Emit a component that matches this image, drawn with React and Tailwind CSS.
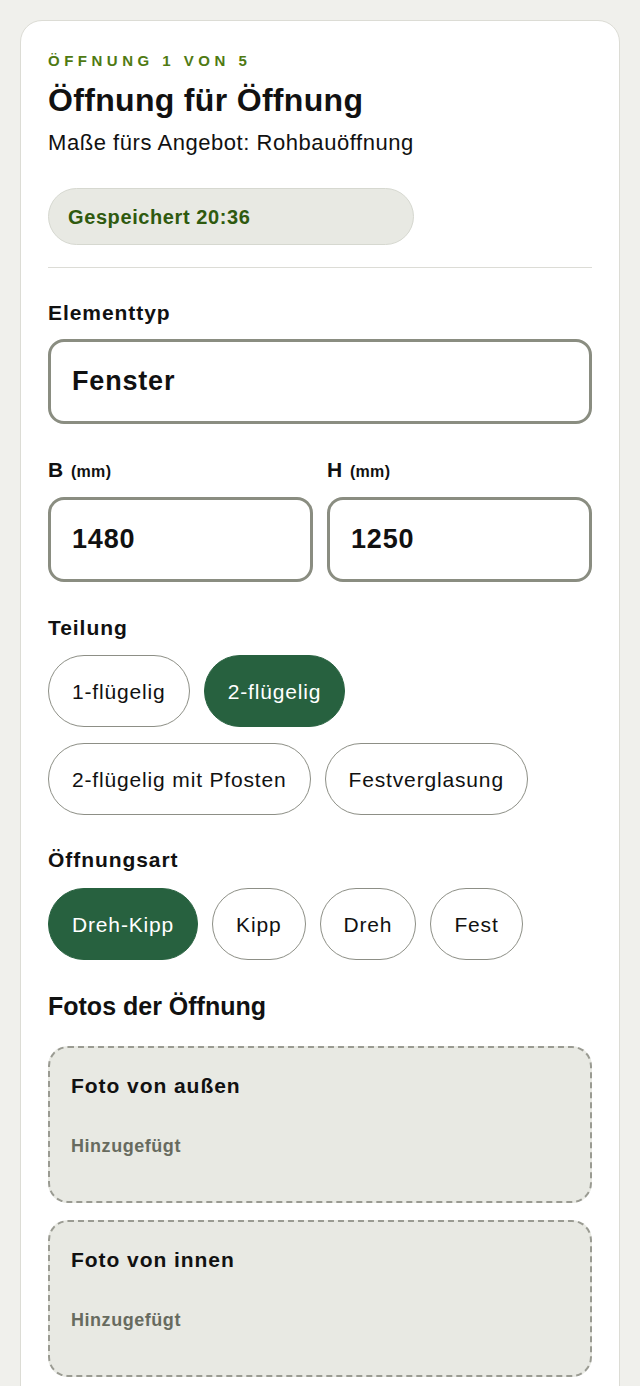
import React, { useState } from "react";

const TEILUNG = ["1-flügelig", "2-flügelig", "2-flügelig mit Pfosten", "Festverglasung"];
const ART = ["Dreh-Kipp", "Kipp", "Dreh", "Fest"];
const FOTOS = ["Foto von außen", "Foto von innen"];

function Chip({ label, on, onClick }) {
  return (
    <button
      onClick={onClick}
      className={
        "h-[72px] px-[23px] rounded-full text-[21px] leading-none tracking-[0.04em] border-[1.5px] " +
        (on ? "bg-[#27613f] border-[#27613f] text-white" : "bg-white border-[#8d8f86] text-[#111]")
      }
    >
      {label}
    </button>
  );
}

function Field({ value }) {
  return (
    <div className="h-[85px] rounded-[16px] border-[3px] border-[#8a8d81] bg-white flex items-center px-[21px] text-[27px] tracking-[0.03em] font-bold text-[#111]">
      {value}
    </div>
  );
}

function Label({ children }) {
  return <div className="h-[24px] text-[21px] leading-[24px] tracking-[0.045em] font-bold">{children}</div>;
}

export default function App() {
  const [teilung, setTeilung] = useState("2-flügelig");
  const [art, setArt] = useState("Dreh-Kipp");

  return (
    <div className="min-h-[1386px] bg-[#f0f0ec] px-[20px] pt-[20px] font-['Liberation_Sans',Arial,sans-serif] text-[#111]">
      <div className="bg-white border border-[#dcdcd5] rounded-[22px] px-[27px] pt-[30px] pb-10">
        <div className="text-[15px] leading-[20px] font-bold tracking-[0.3em] text-[#4f7a12]">ÖFFNUNG 1 VON 5</div>
        <h1 className="mt-[11px] text-[32px] leading-[36px] font-bold tracking-[0.01em]">Öffnung für Öffnung</h1>
        <p className="mt-[11px] text-[22px] leading-[28px] tracking-[0.025em]">Maße fürs Angebot: Rohbauöffnung</p>

        <div className="mt-[31px] w-[366px] h-[57px] rounded-full bg-[#e8e9e3] border border-[#d6d8d0] flex items-center px-[19px] text-[20px] tracking-[0.03em] font-bold text-[#2f5a0f]">
          Gespeichert 20:36
        </div>

        <div className="mt-[22px] h-px bg-[#dcdcd6]" />

        <div className="mt-[33px]"><Label>Elementtyp</Label></div>
        <div className="mt-[14px]"><Field value="Fenster" /></div>

        <div className="mt-[34px] grid grid-cols-2 gap-[14px]">
          <div>
            <Label>B <span className="text-[16px] leading-[24px] tracking-[0.02em]">(mm)</span></Label>
            <div className="mt-[15px]"><Field value="1480" /></div>
          </div>
          <div>
            <Label>H <span className="text-[16px] leading-[24px] tracking-[0.02em]">(mm)</span></Label>
            <div className="mt-[15px]"><Field value="1250" /></div>
          </div>
        </div>

        <div className="mt-[34px]"><Label>Teilung</Label></div>
        <div className="mt-[15px] flex flex-wrap gap-x-[14px] gap-y-[16px]">
          {TEILUNG.map((t) => (
            <Chip key={t} label={t} on={teilung === t} onClick={() => setTeilung(t)} />
          ))}
        </div>

        <div className="mt-[33px]"><Label>Öffnungsart</Label></div>
        <div className="mt-[16px] flex flex-wrap gap-x-[14px] gap-y-[16px]">
          {ART.map((a) => (
            <Chip key={a} label={a} on={art === a} onClick={() => setArt(a)} />
          ))}
        </div>

        <h2 className="mt-[30px] text-[25px] leading-[32px] font-bold">Fotos der Öffnung</h2>
        <div className="mt-[24px] flex flex-col gap-[17px]">
          {FOTOS.map((f) => (
            <div key={f} className="h-[157px] rounded-[20px] border-2 border-dashed border-[#9a9b92] bg-[#e8e9e3] px-[21px] pt-[26px]">
              <div className="text-[21px] leading-[24px] tracking-[0.045em] font-bold">{f}</div>
              <div className="mt-[36px] text-[18px] leading-[24px] tracking-[0.03em] font-bold text-[#676b5f]">Hinzugefügt</div>
            </div>
          ))}
        </div>
      </div>
    </div>
  );
}
